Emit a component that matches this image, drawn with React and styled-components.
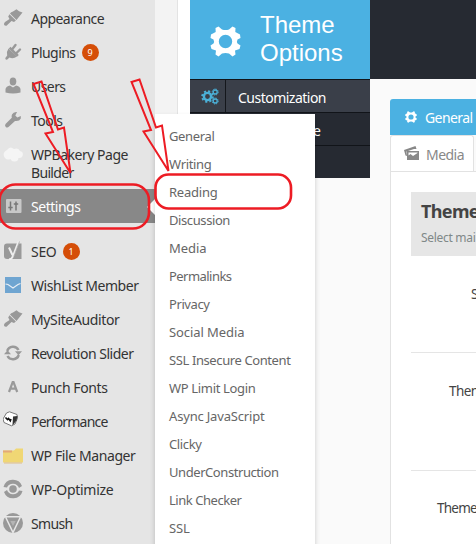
import React, { useLayoutEffect, useRef } from "react";
import styled, { createGlobalStyle } from "styled-components";

const GlobalStyle = createGlobalStyle`
  * { box-sizing: border-box; }
  body { margin: 0; overflow: hidden; background: #fafafa; }
`;

const Screen = styled.div`
  position: relative;
  display: flex;
  width: 476px;
  height: 544px;
  overflow: hidden;
  background: #fafafa;
  font-family: "Noto Sans", "Open Sans", sans-serif;
  font-size: 14px;
`;

const Sidebar = styled.nav`
  flex: 0 0 155px;
  padding-top: 2px;
  background: #e5e5e5;
`;

const NavItem = styled.div`
  position: relative;
  display: flex;
  align-items: flex-start;
  height: ${(p) => (p.$tall ? 51 : 34)}px;
  margin-bottom: ${(p) => (p.$active ? 12 : 0)}px;
  padding: ${(p) => (p.$active ? 9 : 8)}px 0 0 3px;
  gap: 8px;
  line-height: 18px;
  color: ${(p) => (p.$active ? "#fff" : "#333")};
  background: ${(p) => (p.$active ? "#888" : "transparent")};
`;

const Pointer = styled.i`
  position: absolute;
  right: 0;
  top: 10px;
  border: 8px solid transparent;
  border-right-color: #fff;
`;

const IconSlot = styled.span`
  flex: 0 0 20px;
  height: 20px;
  margin-top: -2px;
  color: #999;
  svg { display: block; width: 20px; height: 20px; }
`;

const Lines = styled.span`
  display: flex;
  flex-direction: column;
`;

const Badge = styled.span`
  width: 17px;
  height: 17px;
  margin-left: -2px;
  border-radius: 50%;
  background: #d54e08;
  color: #fff;
  font-size: 9px;
  line-height: 17px;
  text-align: center;
`;

const FitSpan = styled.span`
  display: block;
  width: max-content;
  white-space: nowrap;
`;

function Fit({ text, w }) {
  const ref = useRef(null);
  useLayoutEffect(() => {
    const el = ref.current;
    el.style.letterSpacing = "0px";
    const gap = (w - el.getBoundingClientRect().width) / text.length;
    el.style.letterSpacing = `${gap}px`;
  }, [text, w]);
  return <FitSpan ref={ref}>{text}</FitSpan>;
}

const Gutter = styled.div`
  flex: 0 0 23px;
  background: #f3f3f3;
  border-right: 1px solid #e3e3e3;
`;

const OptionsPanel = styled.section`
  flex: 0 0 192px;
  height: 178px;
  padding-left: 12px;
  background: #fff;
`;

const Banner = styled.header`
  display: flex;
  align-items: center;
  height: 79px;
  padding: 0 0 0 20px;
  gap: 19px;
  background: #4bb1e2;
  color: #fff;
  svg { flex: 0 0 31px; width: 31px; height: 31px; margin-top: 3px; }
`;

const BannerTitle = styled.h1`
  margin: 0 0 1px;
  font: 24px/28px "Liberation Sans", Arial, sans-serif;
`;

const OptionRow = styled.div`
  display: flex;
  align-items: center;
  height: 33px;
  border-top: 1px solid #111419;
  background: ${(p) => (p.$selected ? "#3a3f49" : "#262a32")};
  color: #fff;
`;

const OptionIcon = styled.span`
  display: flex;
  align-items: center;
  justify-content: center;
  width: 36px;
  height: 100%;
  padding-left: 4px;
  border-right: 1px solid #14171c;
  svg { width: 18px; height: 17px; }
`;

const OptionText = styled.span`
  padding: 2px 0 0 ${(p) => p.$inset}px;
`;

const Content = styled.main`
  flex: 0 0 106px;
  overflow: hidden;
`;

const TopBar = styled.div`
  height: 79px;
  background: #262a32;
`;

const Tabs = styled.div`
  display: flex;
  flex-direction: column;
  width: 86px;
  margin: 20px 0 0 20px;
`;

const Tab = styled.div`
  display: flex;
  align-items: center;
  width: ${(p) => (p.$on ? 110 : 84)}px;
  height: 36px;
  padding: 1px 0 0 ${(p) => (p.$on ? 15 : 13)}px;
  gap: ${(p) => (p.$on ? 8 : 6)}px;
  border: ${(p) => (p.$on ? "0" : "1px solid #e2e2e2")};
  border-bottom: 0;
  border-radius: 3px 3px 0 0;
  background: ${(p) => (p.$on ? "#4bb1e2" : "#fff")};
  color: ${(p) => (p.$on ? "#fff" : "#888")};
  svg { flex: none; margin-top: -2px; }
`;

const Panel = styled.div`
  width: 110px;
  height: 380px;
  margin-left: 20px;
  padding: 20px 0 0 20px;
  border: 1px solid #e2e2e2;
  border-right: 0;
  background: #fff;
`;

const PanelHead = styled.div`
  height: 64px;
  padding: 7px 0 0 10px;
  background: #e6e6e6;
`;

const PanelTitle = styled.h2`
  margin: 0 0 3px;
  color: #444;
  font-size: 18px;
  line-height: 25px;
`;

const PanelNote = styled.div`
  color: #7f8888;
  font-size: 12px;
  line-height: 21px;
`;

const Field = styled.div`
  height: ${(p) => p.$h}px;
  padding: ${(p) => p.$top}px 0 0 ${(p) => p.$left}px;
  border-bottom: 1px solid #e5e5e5;
  color: #444;
  font-size: 13.5px;
  line-height: 20px;
`;

const Submenu = styled.ul`
  position: absolute;
  left: 155px;
  top: 114px;
  width: 160px;
  height: 440px;
  margin: 0;
  padding: 8px 14px;
  list-style: none;
  background: #fff;
  box-shadow: 0 3px 5px rgba(0, 0, 0, 0.2);
`;

const SubmenuItem = styled.li`
  height: 28px;
  color: #666;
  font-size: 13px;
  line-height: 28px;
`;

const Markup = styled.svg`
  position: absolute;
  inset: 0;
  pointer-events: none;
`;

const GearShape = ({ fill = "currentColor", ...rest }) => (
  <svg viewBox="0 0 31 31" fill={fill} {...rest}>
    <path
      fillRule="evenodd"
      d="M8.500 .5 12 3.500Q15.500 4.500 19 3.500L22.500 .5 25.500 2 25.300 6 30 8.500 30.500 12 27.500 13.500Q26.500 15.500 27.500 17.500L30.500 19.500 29.500 23 25 24.500 25.500 28.500 22.500 30.500 19 27.500Q15.500 26.500 12 27.500L8.500 30.500 5.500 28.500 6 24.500 1.500 23 .5 19.500 3.500 17.500Q4.500 15.500 3.500 13.500L.5 12 1 8.500 5.700 6 5.500 2ZM15.500 8.800A6.700 6.700 0 1 0 15.500 22.200A6.700 6.700 0 1 0 15.500 8.800Z"
    />
  </svg>
);

const GearsShape = () => (
  <svg viewBox="0 0 18 17" fill="none" stroke="#4bb1d8">
    <circle cx="6.500" cy="8.500" r="3.600" strokeWidth="2.400" />
    <circle cx="6.500" cy="8.500" r="5.400" strokeWidth="1.800" strokeDasharray="2.120 2.120" />
    <circle cx="14.200" cy="4" r="2" strokeWidth="1.300" />
    <circle cx="14.200" cy="4" r="3" strokeWidth="1" strokeDasharray="1.350 1" />
    <circle cx="14.200" cy="13" r="2" strokeWidth="1.300" />
    <circle cx="14.200" cy="13" r="3" strokeWidth="1" strokeDasharray="1.350 1" />
  </svg>
);

const MediaShape = () => (
  <svg width="16" height="15" viewBox="0 0 16 15">
    <path fill="#888" d="M0 4 11.500 0 12.500 3H10L2.500 5.500 3 10 1.500 9.500Z" />
    <path fill="#888" fillRule="evenodd" d="M3 5H15V14H3ZM4.500 6.500V9.500L6.500 8 9 10 13.500 7V6.500Z" />
  </svg>
);

const brush = (
  <path
    fill="currentColor"
    d="M10 3.500 13.500 1.200 16 3.200 19.500 4.500 15.500 9.500 13.500 12 7 5.500Q8 4 10 3.500ZM6.500 6.300 12.900 12.600 11 14 8.500 13 3.500 17.800Q1.500 18 1 16.500 .8 15 2 14L6.500 11 5.200 8.500Z"
  />
);

const icons = {
  brush,
  plug: (
    <g fill="currentColor">
      <path d="M5.500 6.500 14 14.500Q10 17.500 6.500 15.500L4 17.800Q2 18 2.300 16L4.200 13.500Q3 10 5.500 6.500Z" />
      <path d="M9 7.500 12.500 3M13 11.500 17 7.500" stroke="currentColor" strokeWidth="2.400" strokeLinecap="round" />
      <path d="M5.800 6.500 14 14.800 15.800 13 7.500 4.800Z" />
    </g>
  ),
  user: (
    <g fill="currentColor">
      <ellipse cx="10" cy="5.500" rx="3.300" ry="4" />
      <path d="M2.500 16.500V13Q3.200 10.400 7 9.500L10 11.500 13 9.500Q16.800 10.400 17.500 13V16.500Q10 18.500 2.500 16.500Z" />
    </g>
  ),
  wrench: (
    <path
      fill="currentColor"
      d="M17.800 6 14.300 7.500 12.300 5.500 14 2Q10.500 1.500 9 4.500 8.300 6 8.800 7.800L2.500 14Q1.300 16 3 17.300 4.800 18 6 16.500L12 11Q16.500 11.500 17.800 8.500Z"
    />
  ),
  cloud: (
    <path
      transform="translate(0 2)"
      fill="#f5f5f5"
      d="M4 4Q7-.5 11 3 15 1.500 17 5 21 6 19.500 10 18.500 12.500 15.500 12 15 16 11 15.500 8.500 15.500 7.500 13 4 14.500 2 12-1.500 7 4 4Z"
    />
  ),
  sliders: (
    <>
      <rect x="3" y="3" width="15.500" height="14" rx="1" fill="#c8c8c8" />
      <path d="M7.500 5.500V14.500M13 5.500V14.500M5.300 11.500H9.700M10.800 8H15.200" fill="none" stroke="#777" strokeWidth="1.500" />
    </>
  ),
  yoast: (
    <>
      <path d="M4 2.500H18.500V18H4Q1 18 1 15V5.500Q1 2.500 4 2.500Z" fill="#999" />
      <path d="M6 6.500 9.500 14M15.500.5 10 15Q9 18 6 18.500" fill="none" stroke="#eee" strokeWidth="2" />
      <path d="M16.500 .5 10.800 15.500" fill="none" stroke="#aaa" strokeWidth=".8" />
    </>
  ),
  mail: (
    <>
      <rect x="2" y="2" width="16" height="16" fill="#6fa5d1" />
      <path d="M2.500 9 5 9.500 10 13 15 9.500 17.500 8.500" fill="none" stroke="#e8eef5" strokeWidth="1.200" />
    </>
  ),
  refresh: (
    <>
      <path d="M4.200 8A6.200 6.200 0 0 1 15.500 7M15.800 12A6.200 6.200 0 0 1 4.500 13" fill="none" stroke="currentColor" strokeWidth="2.500" />
      <path d="M12 8.200H19L15.500 12.300ZM1 11.300H8L4.500 7.300Z" fill="currentColor" />
    </>
  ),
  letter: <path d="M6 15 9.700 5H10.500L14.200 15M7.500 11.700H12.700" fill="none" stroke="currentColor" strokeWidth="2.200" />,
  cube: (
    <>
      <path d="M3.500 2 6.500 .8 14 3.500 14.500 7 12 13 8.500 14.800 1 11.500 0 8Z" fill="#fff" stroke="#777" strokeWidth="1" />
      <path d="M10 5.500 14.500 5 13.500 9.500 9.500 14.500Z" fill="#333" />
      <path d="M2.500 6.500 4.500 8.500 5.500 7.500 7.300 9.800 8 8" fill="none" stroke="#111" strokeWidth="1.600" />
    </>
  ),
  folder: (
    <g transform="translate(0 2.500)">
      <path d="M0 3H11L13 1H20V15H0Z" fill="#f0d774" />
      <path d="M0 3H9V5H0Z" fill="#e3a978" />
      <path d="M1 15.500H19" stroke="#e0bd86" strokeWidth="1" />
    </g>
  ),
  optimize: (
    <>
      <circle cx="10" cy="10" r="3.800" fill="currentColor" />
      <path d="M.5 8A9.700 9.700 0 0 1 19 7L16 9A6.500 6.500 0 0 0 4 8.500ZM19.500 12A9.700 9.700 0 0 1 1 13L4 11A6.500 6.500 0 0 0 16 11.500Z" fill="currentColor" />
    </>
  ),
  smush: (
    <>
      <circle cx="10" cy="10" r="10" fill="currentColor" />
      <path d="M1 3.800H19M2.800 4.500 10 19.500 17.200 4.500" fill="none" stroke="#e8e8e8" strokeWidth="1.500" />
      <path d="M5.500 6.300H14.500L10 15Z" fill="currentColor" />
      <path d="M7.300 8H12.700L10 13Z" fill="#b5b5b5" />
    </>
  ),
};

const navItems = [
  { icon: "brush", lines: [["Appearance", 73]] },
  { icon: "plug", lines: [["Plugins", 44.5]], badge: "9" },
  { icon: "user", lines: [["Users", 34.5]] },
  { icon: "wrench", lines: [["Tools", 31.5]] },
  { icon: "cloud", lines: [["WPBakery Page", 97], ["Builder", 42.5]], tall: true },
  { icon: "sliders", lines: [["Settings", 49.5]], active: true },
  { icon: "yoast", lines: [["SEO", 25.5]], badge: "1" },
  { icon: "mail", lines: [["WishList Member", 107.5]] },
  { icon: "brush", lines: [["MySiteAuditor", 88.5]] },
  { icon: "refresh", lines: [["Revolution Slider", 102.5]] },
  { icon: "letter", lines: [["Punch Fonts", 76.5]] },
  { icon: "cube", lines: [["Performance", 76.5]] },
  { icon: "folder", lines: [["WP File Manager", 104.5]] },
  { icon: "optimize", lines: [["WP-Optimize", 82.5]] },
  { icon: "smush", lines: [["Smush", 41.5]] },
];

const submenuItems = [
  ["General", 45.5],
  ["Writing", 42.5],
  ["Reading", 48.5],
  ["Discussion", 61],
  ["Media", 37.5],
  ["Permalinks", 62.5],
  ["Privacy", 40.5],
  ["Social Media", 75.5],
  ["SSL Insecure Content", 121.5],
  ["WP Limit Login", 86.5],
  ["Async JavaScript", 95.5],
  ["Clicky", 32.5],
  ["UnderConstruction", 109.5],
  ["Link Checker", 72.5],
  ["SSL", 20.5],
];

const ARROW = "M131.500 82 139.500 79.500 156 127.500 162 125.500 168.500 171 143.500 131.500 151 130Z";

export default function App() {
  return (
    <Screen>
      <GlobalStyle />
      <Sidebar>
        {navItems.map((item) => (
          <NavItem key={item.lines[0][0]} $tall={item.tall} $active={item.active}>
            <IconSlot>
              <svg viewBox="0 0 20 20">{icons[item.icon]}</svg>
            </IconSlot>
            <Lines>
              {item.lines.map(([text, w]) => (
                <Fit key={text} text={text} w={w} />
              ))}
            </Lines>
            {item.badge && <Badge>{item.badge}</Badge>}
            {item.active && <Pointer />}
          </NavItem>
        ))}
      </Sidebar>
      <Gutter />
      <OptionsPanel>
        <Banner>
          <GearShape />
          <BannerTitle>
            Theme
            <br />
            Options
          </BannerTitle>
        </Banner>
        <OptionRow $selected>
          <OptionIcon>
            <GearsShape />
          </OptionIcon>
          <OptionText $inset={12}>
            <Fit text="Customization" w={88} />
          </OptionText>
        </OptionRow>
        <OptionRow>
          <OptionText $inset={123}>e</OptionText>
        </OptionRow>
        <OptionRow />
      </OptionsPanel>
      <Content>
        <TopBar />
        <Tabs>
          <Tab $on>
            <GearShape width="12" height="12" />
            <Fit text="General" w={47.5} />
          </Tab>
          <Tab>
            <MediaShape />
            <Fit text="Media" w={38} />
          </Tab>
        </Tabs>
        <Panel>
          <PanelHead>
            <PanelTitle>
              <Fit text="Theme" w={58} />
            </PanelTitle>
            <PanelNote>
              <Fit text="Select mai" w={54.5} />
            </PanelNote>
          </PanelHead>
          <Field $h={97} $top={28} $left={60}>S</Field>
          <Field $h={118} $top={28} $left={38}>
            <Fit text="Theme" w={41} />
          </Field>
          <Field $h={118} $top={27} $left={26}>
            <Fit text="Theme" w={40} />
          </Field>
        </Panel>
      </Content>
      <Submenu>
        {submenuItems.map(([text, w]) => (
          <SubmenuItem key={text}>
            <Fit text={text} w={w} />
          </SubmenuItem>
        ))}
      </Submenu>
      <Markup width="476" height="544" fill="none" stroke="#ed1c24">
        <path d={ARROW} strokeWidth="2" transform="translate(-98 2)" />
        <path d={ARROW} strokeWidth="2" />
        <rect x="-.5" y="184.500" width="149.500" height="44" rx="16" strokeWidth="2.600" />
        <rect x="155.500" y="174.500" width="135.500" height="34" rx="13" strokeWidth="2.600" />
      </Markup>
    </Screen>
  );
}
